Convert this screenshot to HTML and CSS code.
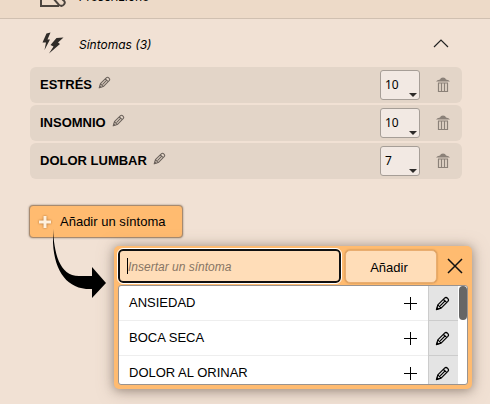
FILE: index.html
```html
<!DOCTYPE html>
<html lang="es">
<head>
<meta charset="utf-8">
<title>Síntomas</title>
<link rel="stylesheet" href="styles.css">
</head>
<body>
<svg class="defs" aria-hidden="true">
  <symbol id="pencil" viewBox="0 0 16 16"><path d="M1.5 14.5 3 9.5 10.2 2.3Q11.800 .8 13.500 2.500T13.700 5.800L6.500 13ZM3 9.500 6.500 13M9 3.500 12.500 7M5.500 10.500 10.500 5.500" fill="none" stroke="currentColor" stroke-width="1.300" stroke-linejoin="round"/><path d="M1 15 2.200 11.500 4.500 13.800Z" fill="currentColor"/></symbol>
  <symbol id="trash" viewBox="0 0 14 16"><path d="M0 4.500Q1 3 4 2.500L5 1Q7 0 9 1L10 2.500Q13 3 14 4.500Z" fill="currentColor"/><path d="M2.500 6V14.500H11.500V6M2 6H12M5.500 6V14M8.500 6V14" fill="none" stroke="currentColor" stroke-width="1.200"/></symbol>
  <symbol id="plus" viewBox="0 0 14 14"><path d="M7.500 1V14M1 7.500H14" stroke="currentColor" stroke-width="1"/></symbol>
</svg>
<section class="section previous">
  <svg class="section-icon" viewBox="0 0 28 28" fill="none" stroke="#4b443e" stroke-width="2"><path d="M15 25H3V3H20V14M21 25H15"/><path d="M15 17 21 24Q24 26 26 23.500T25 19L20 12"/></svg>
  <span class="section-title">Prescrizione</span>
  <svg class="chevron" viewBox="0 0 16 9"><path d="M1 1 8 8 15 1"/></svg>
</section>
<main>
  <section class="section">
    <svg class="section-icon" viewBox="0 0 28 28" fill="#302c29"><path d="M8.500 4.500 12.500 3.500 9.500 10.500H12L6.500 21 8 13.500H4.500Z"/><path d="M18.500 9 25.500 8.500 20 13.500 22 15 11 24.500 15.500 17.500 12.500 16Z"/></svg>
    <h1 class="section-title">Síntomas (3)</h1>
    <svg class="chevron" viewBox="0 0 16 9"><path d="M1 8 8 1 15 8"/></svg>
  </section>
  <ul class="symptoms">
    <li class="symptom">
      <label class="name" for="s1">ESTRÉS</label>
      <button class="icon-button edit" aria-label="Editar"><svg><use href="#pencil"/></svg></button>
      <span class="level"><select id="s1"><option>10</option></select></span>
      <button class="icon-button remove" aria-label="Eliminar"><svg><use href="#trash"/></svg></button>
    </li>
    <li class="symptom">
      <label class="name" for="s2">INSOMNIO</label>
      <button class="icon-button edit" aria-label="Editar"><svg><use href="#pencil"/></svg></button>
      <span class="level"><select id="s2"><option>10</option></select></span>
      <button class="icon-button remove" aria-label="Eliminar"><svg><use href="#trash"/></svg></button>
    </li>
    <li class="symptom">
      <label class="name" for="s3">DOLOR LUMBAR</label>
      <button class="icon-button edit" aria-label="Editar"><svg><use href="#pencil"/></svg></button>
      <span class="level"><select id="s3"><option>7</option></select></span>
      <button class="icon-button remove" aria-label="Eliminar"><svg><use href="#trash"/></svg></button>
    </li>
  </ul>
  <div class="adder">
    <button class="add"><svg viewBox="0 0 12 12"><path d="M6 0V12M0 6H12" stroke="#fff0dc" stroke-width="3"/></svg>Añadir un síntoma</button>
    <svg class="arrow" viewBox="0 0 54 70"><path d="M0 1C1 24 6 48 26 48H39V39L53 55 39 70V61C12 62-2 40 0 1Z"/></svg>
    <div class="popover">
      <form class="search">
        <div class="field"><input type="text" placeholder="Insertar un síntoma" aria-label="Insertar un síntoma"><span class="caret"></span></div>
        <button class="submit" type="button">Añadir</button>
        <button class="icon-button close" type="button" aria-label="Cerrar"><svg viewBox="0 0 16 16"><path d="M1 1 15 15M15 1 1 15"/></svg></button>
      </form>
      <div class="results">
        <ul class="options">
          <li class="option"><span class="option-name">ANSIEDAD</span><button class="icon-button choose" aria-label="Añadir ansiedad"><svg><use href="#plus"/></svg></button><button class="icon-button modify" aria-label="Editar ansiedad"><svg><use href="#pencil"/></svg></button></li>
          <li class="option"><span class="option-name">BOCA SECA</span><button class="icon-button choose" aria-label="Añadir boca seca"><svg><use href="#plus"/></svg></button><button class="icon-button modify" aria-label="Editar boca seca"><svg><use href="#pencil"/></svg></button></li>
          <li class="option"><span class="option-name">DOLOR AL ORINAR</span><button class="icon-button choose" aria-label="Añadir dolor al orinar"><svg><use href="#plus"/></svg></button><button class="icon-button modify" aria-label="Editar dolor al orinar"><svg><use href="#pencil"/></svg></button></li>
        </ul>
        <div class="track"><div class="thumb"></div></div>
      </div>
    </div>
  </div>
</main>
</body>
</html>
```
FILE: styles.css
```css
* { box-sizing: border-box; }
body {
  display: flow-root;
  min-height: 100vh;
  margin: 0;
  background: #f1e1d4;
  color: #000;
  font: 13px/18px "Liberation Sans", Arial, sans-serif;
}
button, input, select { font: inherit; color: inherit; }
ul { margin: 0; padding: 0; list-style: none; }
svg { display: block; flex: none; }
.defs { position: absolute; width: 0; height: 0; }
.section {
  display: flex;
  align-items: center;
  height: 48px;
  padding: 0 41px 0 38px;
}
.previous {
  margin-top: -29px;
  background: #eddac8;
  border-bottom: 1px solid #d0c0b1;
}
.section-icon { width: 28px; height: 28px; }
.section-title {
  flex: 1;
  margin: 4px 0 0 13px;
  font-family: Inter, "Liberation Sans", sans-serif;
  font-size: 12px;
  font-weight: 400;
  font-style: italic;
}
.chevron {
  width: 16px;
  height: 9px;
  fill: none;
  stroke: #222;
  stroke-width: 1.2px;
}
.symptoms {
  display: flex;
  flex-direction: column;
  gap: 2px;
  padding: 0 28px 0 30px;
}
.symptom {
  display: flex;
  align-items: center;
  height: 36px;
  padding: 0 12px 0 10px;
  border-radius: 6px;
  background: #e3d5c8;
}
.name { font-weight: 700; }
.icon-button {
  display: flex;
  align-items: center;
  justify-content: center;
  flex: none;
  padding: 0;
  border: 0;
  background: none;
}
.edit { margin: 0 auto 6px 6px; color: #6b625b; }
.edit svg { width: 13px; height: 13px; }
.level { position: relative; }
.level::after {
  content: "";
  position: absolute;
  right: 3px;
  bottom: 3px;
  border: 4px solid transparent;
  border-top-color: #2d2b29;
  border-bottom: 0;
  pointer-events: none;
}
.level select {
  display: block;
  width: 40px;
  height: 30px;
  padding: 0 4px;
  appearance: none;
  border: 1px solid #a69e97;
  border-radius: 3px;
  background: #f2e9e3;
  font-family: "Noto Sans", sans-serif;
  font-size: 12px;
}
.remove { margin-left: 16px; color: #8b8178; }
.remove svg { width: 14px; height: 16px; }
.adder {
  position: relative;
  padding: 26px 18px 0 29px;
}
.add {
  display: flex;
  align-items: center;
  gap: 9px;
  height: 33px;
  padding: 0 16px 0 9px;
  border: 1px solid #a78a70;
  border-radius: 4px;
  background: #ffbb70;
  box-shadow: 0 0 2px #8c7d70;
}
.add svg { width: 12px; height: 12px; filter: drop-shadow(0 0 1px #a66a30); }
.arrow {
  position: absolute;
  left: 53px;
  top: 49px;
  z-index: 2;
  width: 54px;
  height: 70px;
}
.popover {
  position: absolute;
  left: 114px;
  right: 18px;
  top: 67px;
  padding: 3px 4px 4px;
  border-radius: 5px;
  background: #ffbb70;
  box-shadow: 0 2px 16px #80706480, 0 1px 8px #80706480;
}
.search { display: flex; align-items: center; }
.field { position: relative; flex: 1; }
.field input {
  display: block;
  width: 100%;
  height: 34px;
  padding: 0 8px;
  border: 2px solid #101010;
  border-radius: 5px;
  outline: 1px solid #fff;
  outline-offset: 0;
  background: #ffddb8;
}
.field input::placeholder { color: #877564; font-size: 12px; font-style: italic; opacity: 1; }
.caret {
  position: absolute;
  left: 9px;
  top: 9px;
  width: 1px;
  height: 16px;
  background: #000;
}
.submit {
  width: 92px;
  height: 33px;
  margin-left: 4px;
  padding: 3px 4px 0 0;
  border: 1px solid #e9ad70;
  border-radius: 5px;
  background: #ffddb8;
  box-shadow: 0 0 2px #a97540;
}
.close { width: 31px; height: 33px; padding-left: 4px; }
.close svg { width: 16px; height: 16px; stroke: #111; stroke-width: 1.5px; }
.results {
  display: flex;
  height: 100px;
  margin-top: 2px;
  border: 1px solid #999390;
  border-radius: 3px;
  background: #fff;
  overflow: hidden;
}
.options { flex: 1; }
.option {
  display: flex;
  height: 35px;
  align-items: center;
  padding-left: 10px;
  border-bottom: 1px solid #eee;
}
.option-name { flex: 1; }
.choose { width: 36px; height: 34px; }
.choose svg { width: 14px; height: 14px; }
.modify {
  width: 30px;
  height: 35px;
  padding-right: 2px;
  background: #e4e4e4;
  border-left: 1px solid #ccc;
  border-bottom: 1px solid #ccc;
  align-self: flex-start;
}
.modify svg { width: 15px; height: 15px; }
.track { width: 9px; padding-left: 1px; }
.thumb { height: 34px; border-radius: 4px; background: #666; }
```
